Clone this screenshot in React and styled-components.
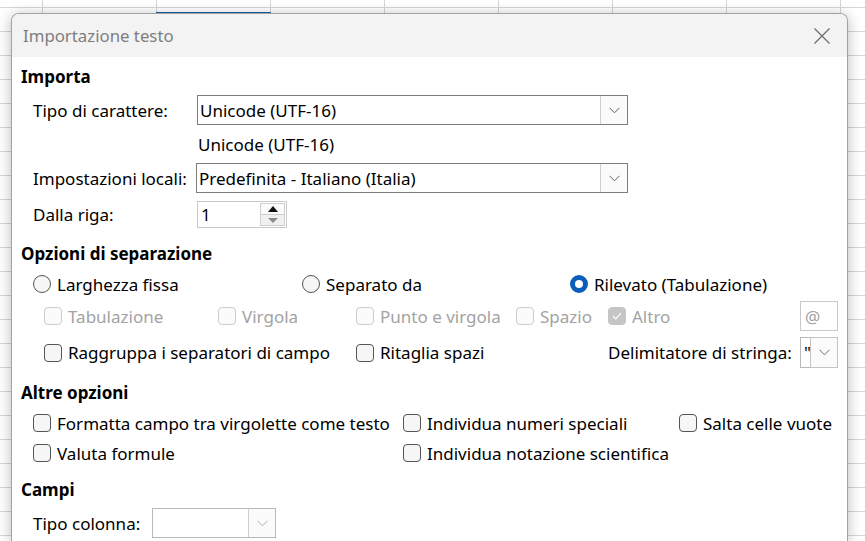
import styled, { createGlobalStyle } from "styled-components";

const GlobalStyle = createGlobalStyle`
  html, body {
    margin: 0;
    height: 100%;
    overflow: hidden;
  }
  body {
    background-color: #ffffff;
    background-image:
      linear-gradient(to right, #d6d6d6 1px, transparent 1px),
      linear-gradient(to bottom, #d6d6d6 1px, transparent 1px);
    background-size: 114px 100%, 100% 24px;
    background-position: 42px 0, 0 7px;
    font-family: "Noto Sans", "Open Sans", sans-serif;
  }
`;

const Page = styled.div`
  position: relative;
  padding: 13px 0 0 11px;
`;

const CellCursor = styled.div`
  position: absolute;
  top: 12px;
  left: 156px;
  width: 115px;
  height: 2px;
  background: #1f5fa6;
`;

const Dialog = styled.div`
  position: relative;
  width: 835px;
  height: 527px;
  border: 1px solid #a3a3a3;
  border-bottom: none;
  border-radius: 8px 8px 0 0;
  background: #ffffff;
  box-shadow: 0 2px 14px rgba(0, 0, 0, 0.28);
  overflow: hidden;
  color: #000;
  font-size: 17px;
`;

const TitleBar = styled.div`
  display: flex;
  align-items: center;
  justify-content: space-between;
  height: 43px;
  padding: 0 17px 0 11px;
  background: #f3f3f3;
`;

const Title = styled.div`
  color: #7e7e7e;
  font-size: 16.8px;
`;

const Body = styled.div`
  display: flex;
  flex-direction: column;
  padding: 8px 0 0 9px;
`;

const Heading = styled.div`
  height: 24px;
  line-height: 24px;
  font-weight: bold;
  margin-top: ${(p) => p.$mt || 0}px;
`;

const FormRow = styled.div`
  display: flex;
  align-items: center;
  height: ${(p) => p.$h || 24}px;
  margin-top: ${(p) => p.$mt || 0}px;
  padding-left: ${(p) => 12 + (p.$indent || 0)}px;
`;

const GridRow = styled.div`
  display: grid;
  grid-template-columns: ${(p) => p.$cols};
  align-items: center;
  height: ${(p) => p.$h || 24}px;
  margin-top: ${(p) => p.$mt || 0}px;
  padding-left: ${(p) => 12 + (p.$indent || 0)}px;
`;

const Label = styled.span`
  width: ${(p) => (p.$w ? `${p.$w}px` : "auto")};
  flex: none;
  white-space: nowrap;
  color: ${(p) => (p.$disabled ? "#a3a3a3" : "#000")};
`;

const Select = styled.div`
  display: flex;
  align-items: stretch;
  width: ${(p) => p.$w}px;
  height: ${(p) => p.$h}px;
  box-sizing: border-box;
  border: 1px solid ${(p) => (p.$light ? "#b9b9b9" : "#7d7d7d")};
`;

const SelectValue = styled.div`
  flex: 1;
  display: flex;
  align-items: center;
  padding-left: ${(p) => (p.$pl != null ? p.$pl : 2)}px;
  white-space: nowrap;
  overflow: hidden;
`;

const DropButton = styled.div`
  width: ${(p) => p.$w || 26}px;
  flex: none;
  display: flex;
  align-items: center;
  justify-content: center;
  border-left: 1px solid #d0d0d0;
  background: #fbfbfb;
  ${(p) => p.$boxed && `border: 1px solid #c4c4c4; margin: -1px -1px -1px 0;`}
`;

const Spin = styled.div`
  display: flex;
  width: 90px;
  height: 27px;
  box-sizing: border-box;
  border: 1px solid #c9c9c9;
`;

const SpinValue = styled.div`
  flex: 1;
  display: flex;
  align-items: center;
  padding-left: 3px;
`;

const SpinButtons = styled.div`
  display: flex;
  flex-direction: column;
  width: 25px;
  padding: 1px 1px 1px 0;
`;

const SpinButton = styled.div`
  flex: 1;
  display: flex;
  align-items: center;
  justify-content: center;
  border: 1px solid #cfcfcf;
  background: ${(p) => (p.$down ? "#f0f0f0" : "#fbfbfb")};
  & + & {
    border-top: none;
  }
`;

const Triangle = styled.div`
  width: 0;
  height: 0;
  border-left: 5px solid transparent;
  border-right: 5px solid transparent;
  ${(p) =>
    p.$down
      ? `border-top: 5px solid #8a8a8a;`
      : `border-bottom: 6px solid #111;`}
`;

const Option = styled.label`
  display: flex;
  align-items: center;
  gap: 6px;
  white-space: nowrap;
  color: ${(p) => (p.$disabled ? "#a3a3a3" : "#000")};
`;

const Box = styled.span`
  display: inline-flex;
  align-items: center;
  justify-content: center;
  flex: none;
  width: 18px;
  height: 18px;
  box-sizing: border-box;
  border-radius: 4px;
  border: 1px solid ${(p) => (p.$disabled ? "#cdcdcd" : "#555")};
  background: ${(p) => (p.$disabled ? "#fbfbfb" : "#f6f6f6")};
  ${(p) =>
    p.$checked &&
    `
    border-color: #c5c5c5;
    background: #c5c5c5;
  `}
`;

const Radio = styled.span`
  display: inline-block;
  flex: none;
  width: 18px;
  height: 18px;
  box-sizing: border-box;
  border-radius: 50%;
  border: 1px solid #555;
  background: #f6f6f6;
  ${(p) =>
    p.$checked &&
    `
    border: 5px solid #0a5fb8;
    background: #ffffff;
  `}
`;

const SmallInput = styled.div`
  width: 38px;
  height: 30px;
  box-sizing: border-box;
  border: 1px solid #c9c9c9;
  display: flex;
  align-items: center;
  padding-left: 4px;
  color: #a3a3a3;
`;

const Chevron = ({ color = "#606060" }) => (
  <svg width="11" height="7" viewBox="0 0 11 7">
    <path d="M0.5 0.8 L5.5 5.8 L10.5 0.8" fill="none" stroke={color} strokeWidth="1" />
  </svg>
);

const CloseIcon = () => (
  <svg width="16" height="16" viewBox="0 0 16 16">
    <path d="M0.5 0.5 L15.5 15.5 M15.5 0.5 L0.5 15.5" stroke="#6e6e6e" strokeWidth="1.3" />
  </svg>
);

const Check = () => (
  <svg width="10" height="8" viewBox="0 0 10 8">
    <path d="M1 4 L3.8 6.8 L9 1.2" fill="none" stroke="#fff" strokeWidth="1.2" />
  </svg>
);

function CheckOption({ label, disabled, checked }) {
  return (
    <Option $disabled={disabled}>
      <Box $disabled={disabled} $checked={checked}>
        {checked && <Check />}
      </Box>
      {label}
    </Option>
  );
}

function RadioOption({ label, checked }) {
  return (
    <Option>
      <Radio $checked={checked} />
      {label}
    </Option>
  );
}

export default function App() {
  return (
    <>
      <GlobalStyle />
      <Page>
        <CellCursor />
        <Dialog>
          <TitleBar>
            <Title>Importazione testo</Title>
            <CloseIcon />
          </TitleBar>
          <Body>
            <Heading>Importa</Heading>
            <FormRow $h={30} $mt={6}>
              <Label $w={164}>Tipo di carattere:</Label>
              <Select $w={431} $h={30}>
                <SelectValue>Unicode (UTF-16)</SelectValue>
                <DropButton>
                  <Chevron />
                </DropButton>
              </Select>
            </FormRow>
            <FormRow $h={24} $mt={7}>
              <Label $w={165} />
              <Label>Unicode (UTF-16)</Label>
            </FormRow>
            <FormRow $h={30} $mt={7}>
              <Label $w={163}>Impostazioni locali:</Label>
              <Select $w={432} $h={30}>
                <SelectValue>Predefinita - Italiano (Italia)</SelectValue>
                <DropButton>
                  <Chevron />
                </DropButton>
              </Select>
            </FormRow>
            <FormRow $h={27} $mt={8}>
              <Label $w={164}>Dalla riga:</Label>
              <Spin>
                <SpinValue>1</SpinValue>
                <SpinButtons>
                  <SpinButton>
                    <Triangle />
                  </SpinButton>
                  <SpinButton $down>
                    <Triangle $down />
                  </SpinButton>
                </SpinButtons>
              </Spin>
            </FormRow>

            <Heading $mt={14}>Opzioni di separazione</Heading>
            <GridRow $cols="269px 268px 1fr" $h={24} $mt={6}>
              <RadioOption label="Larghezza fissa" />
              <RadioOption label="Separato da" />
              <RadioOption label="Rilevato (Tabulazione)" checked />
            </GridRow>
            <GridRow $cols="174px 138px 160px 92px 192px 38px" $h={30} $mt={5} $indent={11}>
              <CheckOption label="Tabulazione" disabled />
              <CheckOption label="Virgola" disabled />
              <CheckOption label="Punto e virgola" disabled />
              <CheckOption label="Spazio" disabled />
              <CheckOption label="Altro" disabled checked />
              <SmallInput>@</SmallInput>
            </GridRow>
            <GridRow $cols="312px 252px 192px 38px" $h={31} $mt={6} $indent={11}>
              <CheckOption label="Raggruppa i separatori di campo" />
              <CheckOption label="Ritaglia spazi" />
              <Label>Delimitatore di stringa:</Label>
              <Select $w={38} $h={31} $light>
                <SelectValue $pl={3}>"</SelectValue>
                <DropButton $w={26} $boxed>
                  <Chevron color="#707070" />
                </DropButton>
              </Select>
            </GridRow>

            <Heading $mt={13}>Altre opzioni</Heading>
            <GridRow $cols="370px 276px 1fr" $h={24} $mt={6}>
              <CheckOption label="Formatta campo tra virgolette come testo" />
              <CheckOption label="Individua numeri speciali" />
              <CheckOption label="Salta celle vuote" />
            </GridRow>
            <GridRow $cols="370px 276px 1fr" $h={24} $mt={6}>
              <CheckOption label="Valuta formule" />
              <CheckOption label="Individua notazione scientifica" />
            </GridRow>

            <Heading $mt={13}>Campi</Heading>
            <FormRow $h={30} $mt={6}>
              <Label $w={119}>Tipo colonna:</Label>
              <Select $w={124} $h={30} $light>
                <SelectValue />
                <DropButton>
                  <Chevron color="#b0b0b0" />
                </DropButton>
              </Select>
            </FormRow>
          </Body>
        </Dialog>
      </Page>
    </>
  );
}
